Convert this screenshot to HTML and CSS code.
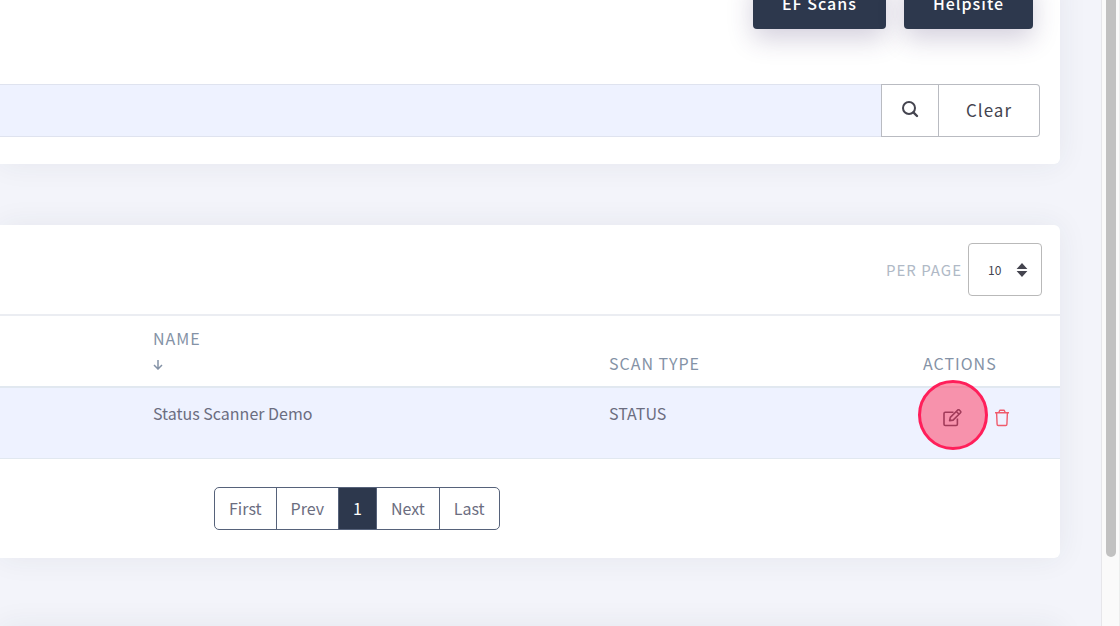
FILE: index.html
```html
<!DOCTYPE html>
<html lang="en">
<head>
    <meta charset="UTF-8">
    <meta name="viewport" content="width=device-width, initial-scale=1.0">
    <title>EF Scans</title>
    <link rel="stylesheet" href="styles.css">
</head>
<body>

<main class="content">
    <!-- Search card -->
    <section class="card search-card">
        <div class="toolbar">
            <button type="button" class="btn">EF Scans</button>
            <button type="button" class="btn">Helpsite</button>
        </div>
        <form class="search-form">
            <input type="text" class="search-input" aria-label="Search">
            <button type="button" class="btn-outline btn-search" aria-label="Search">
                <svg width="18" height="18" viewBox="0 0 18 18" fill="none" stroke="currentColor" stroke-width="2">
                    <circle cx="8" cy="8" r="6"/>
                    <path d="M12.4 12.4L16 16" stroke-width="2.4" stroke-linecap="round"/>
                </svg>
            </button>
            <button type="button" class="btn-outline btn-clear">Clear</button>
        </form>
    </section>

    <!-- Scan list -->
    <section class="card list-card">
        <div class="list-header">
            <label for="perPage">Per page</label>
            <div class="select-wrap">
                <select id="perPage">
                    <option>10</option>
                    <option>25</option>
                    <option>50</option>
                </select>
                <svg width="12" height="14" viewBox="0 0 12 14" fill="currentColor">
                    <path d="M6 0L11.4 6H.6zM6 14L.6 8h10.8z"/>
                </svg>
            </div>
        </div>
        <table class="scan-table">
            <thead>
                <tr>
                    <th class="col-name">Name
                        <svg class="sort-arrow" width="10" height="10" viewBox="0 0 10 10" fill="none" stroke="currentColor" stroke-width="1.5">
                            <path d="M5 0v9M1 5l4 4 4-4"/>
                        </svg>
                    </th>
                    <th>Scan type</th>
                    <th class="col-actions">Actions</th>
                </tr>
            </thead>
            <tbody>
                <tr>
                    <td class="col-name">Status Scanner Demo</td>
                    <td>STATUS</td>
                    <td class="col-actions">
                        <div class="actions">
                            <button type="button" class="icon-btn edit" aria-label="Edit">
                                <svg width="20" height="18" viewBox="0 0 20 18" fill="none" stroke="currentColor" stroke-width="1.6" stroke-linejoin="round">
                                    <path d="M10.5 3.2H2.2c-.7 0-1.2.5-1.2 1.2v10.9c0 .7.5 1.2 1.2 1.2h11c.7 0 1.2-.5 1.2-1.2V9.5"/>
                                    <path d="M6.6 11.6l.7-3.2 7.2-7.2c.6-.6 1.4-.6 2 0l.8.8c.6.6.6 1.4 0 2l-7.2 7.1zM13.3 2.5l2.8 2.8"/>
                                </svg>
                                <span class="marker"></span>
                            </button>
                            <button type="button" class="icon-btn delete" aria-label="Delete">
                                <svg width="14" height="18" viewBox="0 0 14 18" fill="none" stroke="currentColor" stroke-width="1.4" stroke-linejoin="round">
                                    <path d="M0 3.7h14M3.7 3.7L4.8 1.3h4.4l1.1 2.4M1.6 3.7l.5 11.6c0 .7.5 1.2 1.2 1.2h7.4c.7 0 1.2-.5 1.2-1.2l.5-11.6"/>
                                </svg>
                            </button>
                        </div>
                    </td>
                </tr>
            </tbody>
        </table>
        <nav class="pagination" aria-label="Pages">
            <a href="#">First</a>
            <a href="#">Prev</a>
            <a href="#" class="active">1</a>
            <a href="#">Next</a>
            <a href="#">Last</a>
        </nav>
    </section>

    <section class="card footer-card"></section>
</main>

<div class="scroll-track"><div class="scroll-thumb"></div></div>

</body>
</html>
```
FILE: styles.css
```css
* {
    box-sizing: border-box;
}
body {
    display: flex;
    height: 100vh;
    margin: 0;
    overflow: hidden;
    background-color: #f3f4fa;
    color: #6b6d80;
    font-family: "Noto Sans CJK SC", "Open Sans", sans-serif;
    font-size: 16px;
    line-height: 24px;
}
button, input, select {
    font-family: inherit;
    margin: 0;
}
.content {
    flex: 1;
    padding-right: 41px;
}
.card {
    background-color: #fff;
    border-radius: 0 6px 6px 0;
    box-shadow: 0 0 30px rgba(40, 50, 70, 0.07);
}

/* search card */
.search-card {
    padding: 0 20px 27px 0;
    margin-bottom: 61px;
}
.toolbar {
    display: flex;
    justify-content: flex-end;
    gap: 18px;
    padding-right: 7px;
    margin-top: -23px;
    margin-bottom: 55px;
}
.btn {
    height: 52px;
    padding: 0 29px;
    border: none;
    border-radius: 4px;
    background-color: #2d384d;
    color: #fff;
    font-size: 16px;
    font-weight: 500;
    letter-spacing: 1px;
    box-shadow: 0 10px 26px rgba(60, 40, 100, 0.22);
}
.search-form {
    display: flex;
}
.search-input {
    flex: 1;
    height: 53px;
    border: 1px solid #dfe3ef;
    border-width: 1px 0;
    background-color: #eef2ff;
}
.btn-outline {
    height: 53px;
    border: 1px solid #b9bbc1;
    background-color: #fff;
    color: #44444f;
    font-size: 17px;
    letter-spacing: 1px;
}
.btn-search {
    width: 58px;
    padding: 0 0 8px;
}
.btn-search svg {
    vertical-align: middle;
}
.btn-clear {
    width: 101px;
    padding: 0 0 2px;
    border-left: none;
    border-radius: 0 4px 4px 0;
}

/* scan list */
.list-card {
    margin-bottom: 68px;
    padding-bottom: 28px;
}
.list-header {
    display: flex;
    align-items: center;
    justify-content: flex-end;
    gap: 6px;
    padding: 18px 18px 18px 0;
    border-bottom: 2px solid #ebedf2;
}
.list-header label {
    color: #b0b9c6;
    font-size: 15px;
    letter-spacing: 1px;
    text-transform: uppercase;
}
.select-wrap {
    position: relative;
    color: #44444f;
}
.select-wrap select {
    display: block;
    width: 74px;
    height: 53px;
    padding: 0 19px;
    appearance: none;
    border: 1px solid #b9b9b9;
    border-radius: 4px;
    background-color: #fff;
    color: #44444f;
    font-size: 12px;
}
.select-wrap svg {
    position: absolute;
    top: 20px;
    right: 14px;
    pointer-events: none;
}
.scan-table {
    width: 100%;
    border-collapse: separate;
    border-spacing: 0;
    table-layout: fixed;
}
.scan-table th {
    height: 72px;
    padding: 0 0 11px;
    border-bottom: 2px solid #e1e8f0;
    color: #8492a6;
    font-size: 16px;
    font-weight: 400;
    letter-spacing: 1px;
    text-align: left;
    text-transform: uppercase;
    vertical-align: bottom;
}
.scan-table td {
    height: 71px;
    padding: 13px 0 0;
    border-bottom: 1px solid #e1e8f0;
    background-color: #eef2ff;
    vertical-align: top;
}
.scan-table .col-name {
    width: 609px;
    padding-left: 153px;
}
.scan-table .col-actions {
    width: 137px;
}
.sort-arrow {
    display: block;
    margin: 10px 0 5px;
}
.actions {
    display: flex;
    gap: 32px;
    padding: 8px 0 0 20px;
}
.icon-btn {
    position: relative;
    display: flex;
    padding: 0;
    border: none;
    background: none;
    color: #44445a;
}
.icon-btn.delete {
    color: #ef5b6c;
}
.marker {
    position: absolute;
    top: -29px;
    left: -25px;
    width: 70px;
    height: 70px;
    border: 3px solid #ff1f5a;
    border-radius: 50%;
    background-color: rgba(255, 50, 90, 0.5);
}

/* pagination */
.pagination {
    display: flex;
    width: max-content;
    margin: 28px 0 0 214px;
    border: 1px solid #56627a;
    border-radius: 5px;
}
.pagination a {
    padding: 8px 14px 9px;
    border-left: 1px solid #56627a;
    color: #6b6d80;
    text-decoration: none;
}
.pagination a:first-child {
    border-left: none;
}
.pagination a.active {
    background-color: #2d384d;
    color: #fff;
}
.footer-card {
    height: 120px;
}

/* scrollbar */
.scroll-track {
    width: 19px;
    padding: 0 3px 0 4px;
    border-left: 1px solid #e6e6ea;
    border-right: 1px solid #ededed;
    background-color: #fafafa;
}
.scroll-thumb {
    height: 89%;
    border-radius: 0 0 6px 6px;
    background-color: #c1c1c1;
}
```
